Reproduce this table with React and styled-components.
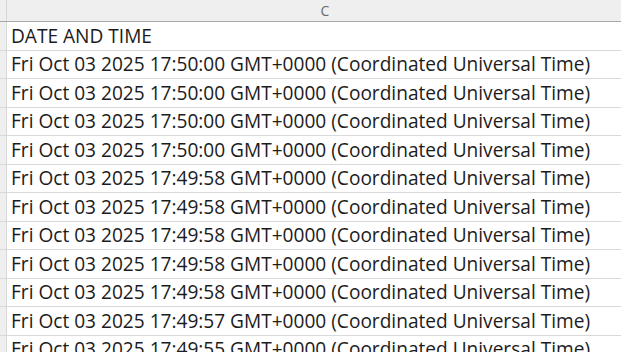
import React from "react";
import styled, { createGlobalStyle } from "styled-components";

const Global = createGlobalStyle`
  html, body {
    margin: 0;
    padding: 0;
    background: #ffffff;
    overflow: hidden;
  }
`;

const rows = [
  "Fri Oct 03 2025 17:50:00 GMT+0000 (Coordinated Universal Time)",
  "Fri Oct 03 2025 17:50:00 GMT+0000 (Coordinated Universal Time)",
  "Fri Oct 03 2025 17:50:00 GMT+0000 (Coordinated Universal Time)",
  "Fri Oct 03 2025 17:50:00 GMT+0000 (Coordinated Universal Time)",
  "Fri Oct 03 2025 17:49:58 GMT+0000 (Coordinated Universal Time)",
  "Fri Oct 03 2025 17:49:58 GMT+0000 (Coordinated Universal Time)",
  "Fri Oct 03 2025 17:49:58 GMT+0000 (Coordinated Universal Time)",
  "Fri Oct 03 2025 17:49:58 GMT+0000 (Coordinated Universal Time)",
  "Fri Oct 03 2025 17:49:58 GMT+0000 (Coordinated Universal Time)",
  "Fri Oct 03 2025 17:49:57 GMT+0000 (Coordinated Universal Time)",
  "Fri Oct 03 2025 17:49:55 GMT+0000 (Coordinated Universal Time)",
];

const Sheet = styled.div`
  width: 621px;
  height: 352px;
  overflow: hidden;
  font-family: "Open Sans", "Liberation Sans", sans-serif;
`;

const HeaderRow = styled.div`
  display: grid;
  grid-template-columns: 7px 640px;
  height: 21px;
  background: #efefef;
  border-bottom: 1px solid #a8a8a8;
`;

const Corner = styled.div`
  border-right: 1px solid #d6d6d6;
`;

const ColLetter = styled.div`
  display: flex;
  align-items: center;
  justify-content: center;
  font-size: 14px;
  color: #6a6a6a;
  padding-right: 4px;
`;

const Row = styled.div`
  display: grid;
  grid-template-columns: 7px 640px;
  height: 28.5px;
  box-sizing: border-box;
  border-bottom: 1px solid #d9d9d9;
`;

const RowHead = styled.div`
  background: #efefef;
  border-right: 1px solid #d6d6d6;
`;

const Cell = styled.div`
  display: flex;
  align-items: center;
  padding-left: 4px;
  font-size: 19.1px;
  color: #1c1c1c;
  white-space: nowrap;
`;

export default function App() {
  return (
    <Sheet>
      <Global />
      <HeaderRow>
        <Corner />
        <ColLetter>C</ColLetter>
      </HeaderRow>
      <Row>
        <RowHead />
        <Cell>DATE AND TIME</Cell>
      </Row>
      {rows.map((r, i) => (
        <Row key={i}>
          <RowHead />
          <Cell>{r}</Cell>
        </Row>
      ))}
    </Sheet>
  );
}
